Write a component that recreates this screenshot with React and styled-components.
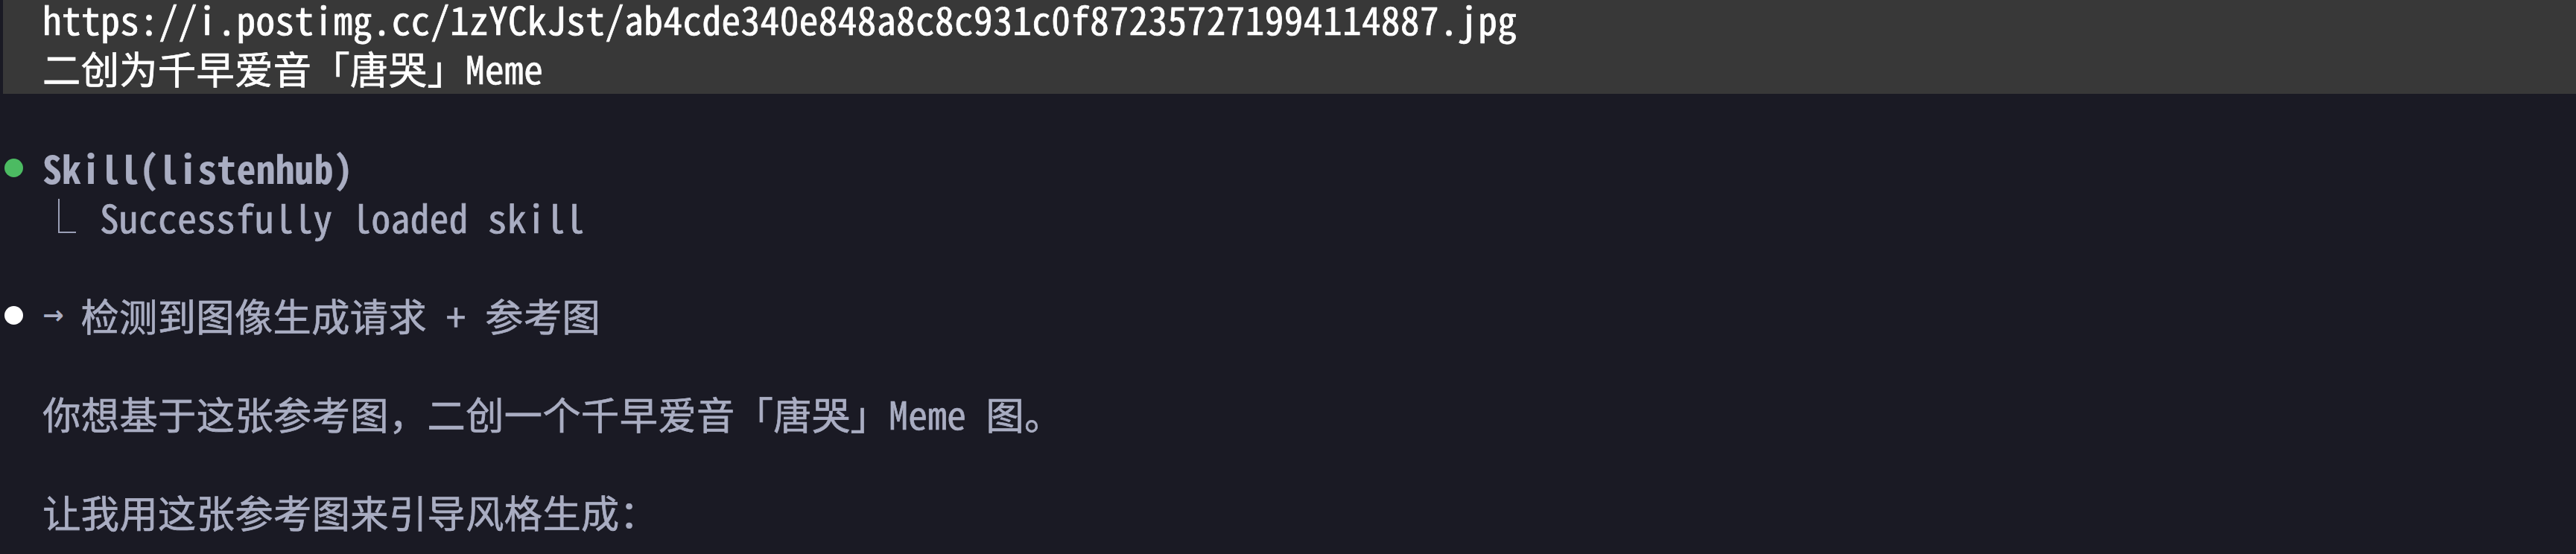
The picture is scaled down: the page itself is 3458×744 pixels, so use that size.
import styled, { createGlobalStyle } from "styled-components";

const GlobalStyle = createGlobalStyle`
  html, body {
    margin: 0;
    padding: 0;
    background: #1a1a24;
  }
`;

const Screen = styled.div`
  width: 3458px;
  height: 744px;
  overflow: hidden;
  background: #1a1a24;
  font-family: "Noto Sans Mono CJK SC", "DejaVu Sans Mono", "Noto Sans CJK SC", monospace;
  font-size: 51.2px;
  line-height: 66px;
  letter-spacing: 0.45px;
  color: #a9adc2;
  -webkit-text-stroke: 0.7px currentColor;
`;

const PromptBand = styled.section`
  margin: -8px 0 0 4px;
  height: 134px;
  background: #383838;
  color: #ffffff;
  padding-left: 53px;
`;

const Line = styled.div`
  height: 66px;
  white-space: pre;
  display: flex;
  align-items: center;
  padding-left: ${(p) => (p.$indent ? "6px" : "0")};
`;

const Gutter = styled.span`
  width: 51.2px;
  flex: none;
  display: flex;
  align-items: center;
`;

const Dot = styled.span`
  display: block;
  width: 25px;
  height: 25px;
  border-radius: 50%;
  background: ${(p) => p.$color};
`;

const ElbowCell = styled.span`
  width: 76.8px;
  flex: none;
  align-self: stretch;
  display: flex;
  align-items: flex-start;
`;

const Elbow = styled.span`
  display: block;
  margin: 9px 0 0 21px;
  width: 22px;
  height: 44px;
  border-left: 2px solid #9a9fb6;
  border-bottom: 2px solid #9a9fb6;
`;

const Arrow = styled.span`
  width: 51.2px;
  flex: none;
  font-family: "DejaVu Sans", sans-serif;
  font-size: 34px;
  font-weight: 700;
  -webkit-text-stroke: 0;
  letter-spacing: 0;
`;

const Text = styled.span`
  font-weight: ${(p) => (p.$bold ? 700 : 400)};
  -webkit-text-stroke: ${(p) => (p.$bold ? "0.2px" : "0.7px")} currentColor;
`;

const Blank = styled.div`
  height: 66px;
`;

export default function App() {
  return (
    <>
      <GlobalStyle />
      <Screen>
        <PromptBand>
          <Line>https://i.postimg.cc/1zYCkJst/ab4cde340e848a8c8c931c0f872357271994114887.jpg</Line>
          <Line>二创为千早爱音「唐哭」Meme</Line>
        </PromptBand>
        <Blank />
        <Line $indent>
          <Gutter>
            <Dot $color="#4cbb62" />
          </Gutter>
          <Text $bold>Skill(listenhub)</Text>
        </Line>
        <Line $indent>
          <Gutter />
          <ElbowCell>
            <Elbow />
          </ElbowCell>
          <Text>Successfully loaded skill</Text>
        </Line>
        <Blank />
        <Line $indent>
          <Gutter>
            <Dot $color="#ffffff" />
          </Gutter>
          <Arrow>→</Arrow>
          <Text>检测到图像生成请求 + 参考图</Text>
        </Line>
        <Blank />
        <Line $indent>
          <Gutter />
          <Text>你想基于这张参考图，二创一个千早爱音「唐哭」Meme 图。</Text>
        </Line>
        <Blank />
        <Line $indent>
          <Gutter />
          <Text>让我用这张参考图来引导风格生成：</Text>
        </Line>
      </Screen>
    </>
  );
}
